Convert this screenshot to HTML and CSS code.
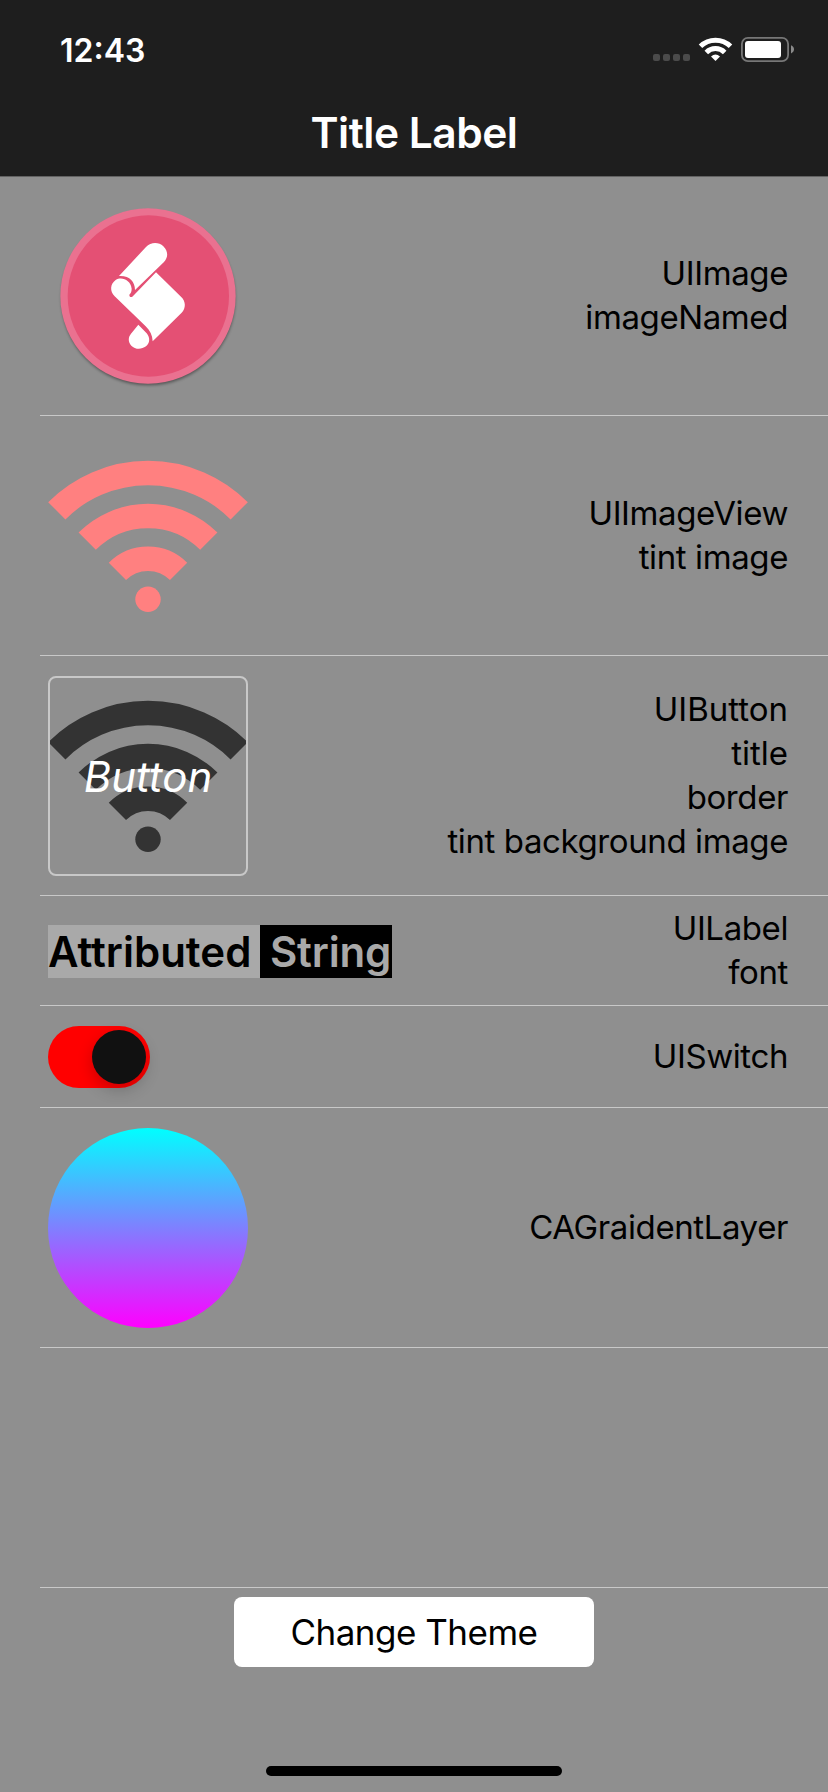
FILE: index.html
```html
<!DOCTYPE html>
<html lang="en">
<head>
<meta charset="utf-8">
<title>Title Label</title>
<link rel="stylesheet" href="styles.css">
</head>
<body>
<div class="screen">
  <header class="nav">
    <div class="status">
      <span class="time">12:43</span>
      <svg class="status-icons" viewBox="653 35 142 29">
        <g fill="#4b4b4b"><rect x="653" y="54" width="7" height="7" rx="2"/><rect x="663" y="54" width="7" height="7" rx="2"/><rect x="673" y="54" width="7" height="7" rx="2"/><rect x="683" y="54" width="7" height="7" rx="2"/></g>
        <g fill="none" stroke="#fff" stroke-width="5"><path d="M700.5 46.3A21.5 21.5 0 0 1 730.5 46.3"/><path d="M706.3 52.4A13 13 0 0 1 724.7 52.4"/></g>
        <path d="M715.5 61L711 56.6Q715.500 52.400 720 56.600Z" fill="#fff"/>
        <rect x="741.900" y="37.900" width="46.200" height="23.200" rx="6" fill="none" stroke="#777" stroke-width="1.800"/>
        <rect x="745" y="41" width="36" height="17" rx="3" fill="#fff"/>
        <path d="M791 45.200Q794 46.500 794 49.300T791 53.400Z" fill="#8a8a8a"/>
      </svg>
    </div>
    <h1 class="title">Title Label</h1>
  </header>
  <main class="table">
    <section class="row">
      <svg class="thumb" viewBox="54 18 600 600">
        <defs><filter id="soft" x="-10%" y="-10%" width="120%" height="120%"><feGaussianBlur stdDeviation="4"/></filter></defs>
        <circle cx="355" cy="325" r="261" fill="#000" opacity=".4" filter="url(#soft)"/>
        <circle cx="354" cy="318" r="263" fill="#ea7190"/>
        <circle cx="355" cy="318" r="242" fill="#e45074"/>
        <g fill="#fff">
          <path d="M267 258L348 171C362 156 386 155 400 169C415 184 415 202 402 216L315 300C315 274 298 256 267 258Z"/>
          <path d="M378 247L453 320C468 334 468 354 455 368L368 454C367 435 360 421 347 409L254 319C239 304 240 282 257 270C275 259 302 270 305 296C305 304 303 309 298 314C298 321 302 323 307 320Z"/>
          <path d="M325 404L350 430C361 443 360 460 348 469C333 480 315 478 304 467C294 455 294 442 303 431Z"/>
        </g>
      </svg>
      <p class="label">UIImage<br>imageNamed</p>
    </section>
    <section class="row">
      <svg class="thumb wifi" viewBox="0 0 200 200">
        <path d="M8.800 74.800A129 129 0 0 1 191.200 74.800M39.200 105.200A86 86 0 0 1 160.800 105.200M69.400 135.400A43.300 43.300 0 0 1 130.600 135.400"/><circle cx="100" cy="163.300" r="12.700"/>
      </svg>
      <p class="label">UIImageView<br>tint image</p>
    </section>
    <section class="row">
      <button class="image-button">
        <svg class="wifi dark" viewBox="2 2 196 196">
          <path d="M8.800 74.800A129 129 0 0 1 191.200 74.800M39.200 105.200A86 86 0 0 1 160.800 105.200M69.400 135.400A43.300 43.300 0 0 1 130.600 135.400"/><circle cx="100" cy="163.300" r="12.700"/>
        </svg>
        <span class="image-button-title">Button</span>
      </button>
      <p class="label"><span class="loose">UIButton<br>title</span><br>border<br>tint background image</p>
    </section>
    <section class="row row-label">
      <p class="attributed"><span class="part-light">Attributed</span><span class="part-dark">String</span></p>
      <p class="label">UILabel<br>font</p>
    </section>
    <section class="row row-switch">
      <div class="switch"><div class="knob"></div></div>
      <p class="label">UISwitch</p>
    </section>
    <section class="row">
      <div class="gradient"></div>
      <p class="label">CAGraidentLayer</p>
    </section>
    <section class="row"></section>
  </main>
  <footer class="footer">
    <button class="theme-button">Change Theme</button>
    <div class="home-bar"></div>
  </footer>
</div>
</body>
</html>
```
FILE: styles.css
```css
* { box-sizing: border-box; }
body { margin: 0; background: #8f8f8f; font-family: Inter, "Liberation Sans", sans-serif; color: #000; }
.screen { width: 828px; height: 1792px; display: flex; flex-direction: column; background: #8f8f8f; overflow: hidden; }
.nav { height: 177px; background: #1e1e1e; border-bottom: 1px solid #626262; color: #fff; }
.status { height: 100px; display: flex; justify-content: space-between; padding: 0 33px 0 60px; }
.time { font-size: 32px; font-weight: 600; line-height: 38px; padding-top: 32px; }
.status-icons { width: 142px; height: 29px; margin-top: 35px; }
.title { margin: 0; font-size: 42.5px; font-weight: 600; line-height: 66px; letter-spacing: -0.5px; text-align: center; }
.table { margin-top: -1px; padding-left: 40px; }
.row { height: 240px; display: flex; align-items: center; justify-content: space-between; padding: 0 40px 0 8px; border-bottom: 1px solid #c8c8c8; }
.row-label { height: 110px; }
.row-switch { height: 102px; }
.thumb { width: 200px; height: 200px; }
.wifi { fill: #ff8080; }
.wifi path { fill: none; stroke: #ff8080; stroke-width: 24.4px; }
.wifi.dark { fill: #333; display: block; width: 196px; height: 196px; }
.wifi.dark path { stroke: #333; }
.label { margin: 0; padding-bottom: 2px; font-size: 33px; line-height: 44px; letter-spacing: -0.4px; text-align: right; }
.loose { letter-spacing: 0; }
.image-button { position: relative; width: 200px; height: 200px; padding: 0; border: 2px solid #c8c8c8; border-radius: 8px; background: none; font: inherit; color: #fff; overflow: hidden; }
.image-button-title { position: absolute; inset: 0; font-size: 42px; font-style: italic; line-height: 197px; }
.attributed { margin: 0; padding-top: 2px; display: flex; font-size: 42px; font-weight: 600; line-height: 53px; }
.part-light { width: 212px; background: #a9a9a9; }
.part-dark { width: 132px; padding-left: 10px; background: #000; color: #a9a9a9; letter-spacing: -0.2px; }
.switch { width: 102px; height: 62px; padding: 4px; border-radius: 31px; background: #f00; display: flex; justify-content: flex-end; }
.knob { width: 54px; height: 54px; border-radius: 50%; background: #111; box-shadow: 0 6px 16px rgba(0,0,0,.2); }
.gradient { width: 200px; height: 200px; border-radius: 50%; background: linear-gradient(#0ff, #f0f); }
.footer { flex: 1; display: flex; flex-direction: column; align-items: center; justify-content: space-between; padding: 9px 0 16px; }
.theme-button { width: 360px; height: 70px; padding: 0; border: 0; border-radius: 8px; background: #fff; color: #000; font: 35px/70px Inter, sans-serif; letter-spacing: -0.5px; }
.home-bar { width: 296px; height: 10px; border-radius: 5px; background: #000; }
```
